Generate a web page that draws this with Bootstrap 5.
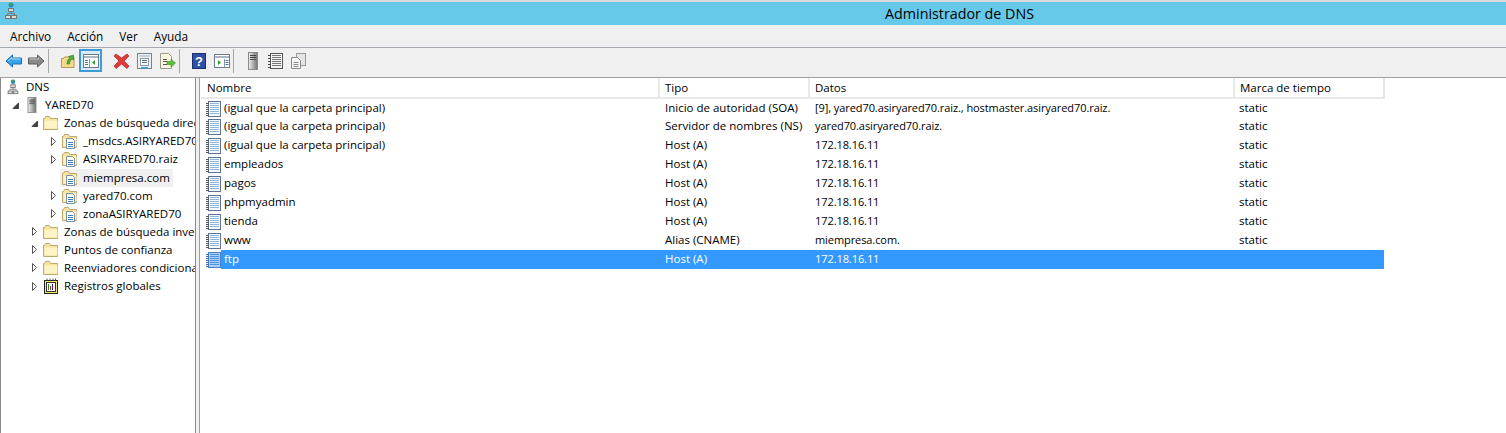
<!DOCTYPE html>
<html lang="es">
<head>
  <meta charset="UTF-8">
  <title>Administrador de DNS</title>
  <link href="https://cdn.jsdelivr.net/npm/bootstrap@5.3.0/dist/css/bootstrap.min.css" rel="stylesheet">
  <script src="https://cdn.jsdelivr.net/npm/bootstrap@5.3.0/dist/js/bootstrap.bundle.min.js"></script>
  <style>
    html, body { height: 433px; overflow: hidden; }
    body { background: #f0f0f0; color: #000; font-family: "Open Sans", "Noto Sans", sans-serif; font-size: 11.5px; line-height: 18px; }
    .win-title { height: 25px; background: #66c9ea; border-top: 2px solid #dcdcdc; padding-left: 3px; }
    .win-title-text { font-size: 14.3px; left: 885px; top: 3px; }
    .menu-bar { height: 23px; border-bottom: 1px solid #a9a9b2; padding-left: 3px; font-size: 11.8px; }
    .menu-item { padding: 0 7px; margin-right: 2px; }
    .tool-bar { height: 29px; padding: 1px 0 0 2px; }
    .tool-btn { width: 23px; height: 23px; padding: 0; border: 1px solid transparent; border-radius: 0; }
    .tool-btn.on { background: #d9ebf8; border: 2px solid #3d9bd6; }
    .tool-sep { width: 8px; height: 24px; }
    .tool-sep.ruled { border-left: 1px solid #a8a8a8; }
    .panes { height: 356px; border-top: 1px solid #a0a0a0; }
    .tree-pane { width: 196px; height: 100%; background: #fff; border-right: 1px solid #8c8c8c; border-left: 1px solid #8c8c8c; overflow: hidden; flex: none; }
    .tree-row { height: 18.1px; white-space: nowrap; }
    .lv0 { padding-left: 4px; }
    .lv1 { padding-left: 10px; }
    .lv2 { padding-left: 29px; }
    .lv3 { padding-left: 48px; }
    .twisty { width: 13px; flex: none; }
    .tree-ico { width: 16px; height: 16px; flex: none; margin-right: 5px; }
    .tree-sel { background: #f0f0f0; margin-left: -2px; padding: 0 3px 0 2px; height: 18px; }
    .list-pane { margin-left: 3px; background: #fff; border-left: 1px solid #a0a0a0; padding-left: 1px; flex: 1; height: 100%; }
    .rec-table { table-layout: fixed; width: 1183px; border-collapse: collapse; }
    .rec-table th { font-weight: 400; height: 20px; padding: 0 0 0 5px; border-right: 2px solid #e9e9e9; border-bottom: 2px solid #e9e9e9; }
    .rec-table th:first-child { padding-left: 6px; }
    .rec-table td { height: 19px; padding: 0 0 0 6px; white-space: nowrap; overflow: hidden; vertical-align: top; line-height: 17px; }
    .rec-table td.ico-cell { padding: 2px 0 0 5px; line-height: 0; }
    .rec-table td.name-cell { padding-left: 3px; }
    .rec-table td.data-cell { font-size: 11px; letter-spacing: -.08px; }
    .rec-table td.time-cell { padding-left: 5px; }
    .rec-table tr.picked td:not(.ico-cell) { background: #3399ff; color: #fff; }
    .rec-ico { width: 15px; height: 16px; display: block; }
  </style>
</head>
<body>
  <svg width="0" height="0" class="position-absolute">
    <defs>
      <linearGradient id="g-srv" x1="0" x2="1" y1="0" y2="0"><stop offset="0" stop-color="#f2f2f2"/><stop offset="1" stop-color="#6f6f6f"/></linearGradient>
      <symbol id="i-dns" viewBox="0 0 16 18">
        <circle cx="8" cy="3" r="2.500" fill="#2f86c4"/><path d="M6 2l2-1.500 1.500 1.500-1 2-1.500-.5z" fill="#3fa845"/>
        <rect x="5.500" y="6.500" width="5" height="3" fill="#dcdcdc" stroke="#777"/>
        <path d="M8 10v2M4.500 13v-1.500h7V13" fill="none" stroke="#777"/>
        <rect x="2.500" y="13.500" width="5" height="3" fill="#dcdcdc" stroke="#777"/>
        <rect x="8.500" y="13.500" width="5" height="3" fill="#dcdcdc" stroke="#777"/>
      </symbol>
      <symbol id="i-server" viewBox="0 0 16 18">
        <rect x="3.500" y="0.500" width="9" height="17" fill="url(#g-srv)" stroke="#8a8a8a"/>
        <path d="M5 3.500h6M5 5.500h6" stroke="#444"/><rect x="5" y="7" width="6" height="1" fill="#555"/>
      </symbol>
      <symbol id="i-folder" viewBox="0 0 16 16">
        <path d="M.5 14.500v-11h1l1-2h4l1 2h7v11z" fill="#f8e3a0" stroke="#bfa86e"/>
        <path d="M1.500 5.500h13v8h-13z" fill="#fdf3c6"/>
      </symbol>
      <symbol id="i-zone" viewBox="0 0 16 16">
        <path d="M.5 14.500v-11h1l1-2h4l1 2h7v11z" fill="#f8e3a0" stroke="#bfa86e"/>
        <path d="M1.500 5.500h13v8h-13z" fill="#fdf3c6"/>
        <path d="M4.500 5.500h6l2 2v8h-8z" fill="#fff" stroke="#7d8ea0"/>
        <path d="M6 9.500h5M6 11.500h5M6 13.500h5" stroke="#3f82bb"/>
      </symbol>
      <symbol id="i-global" viewBox="0 0 16 16">
        <rect x="1.500" y="2.500" width="13" height="13" fill="#f6e66c" stroke="#222"/>
        <path d="M3.500 1.500h1M6.500 1.500h1M9.500 1.500h1M12 1.500h1" stroke="#555" stroke-width="2"/>
        <rect x="3.500" y="4.500" width="9" height="9" fill="#fff" stroke="#333"/>
        <path d="M5.500 6v6" stroke="#2a8f2a"/><path d="M7.500 8v4" stroke="#d02020"/><path d="M9.500 6v6" stroke="#2222aa"/>
      </symbol>
      <symbol id="i-rec" viewBox="0 0 15 16">
        <rect x="2.500" y="0.500" width="12" height="15" fill="#f6fafd" stroke="#5f7396"/>
        <path d="M4 2.500h9M4 4.500h9M4 6.500h9M4 8.500h9M4 10.500h9M4 12.500h9" stroke="#8fb4dc"/>
        <path d="M0 2.500h3M0 4.500h3M0 6.500h3M0 8.500h3M0 10.500h3M0 12.500h3M0 14.500h3" stroke="#555"/>
      </symbol>
      <symbol id="i-rec-sel" viewBox="0 0 15 16">
        <rect x="2.500" y="0.500" width="12" height="15" fill="#a9cff6" stroke="#4d7fc4"/>
        <path d="M4 2.500h9M4 4.500h9M4 6.500h9M4 8.500h9M4 10.500h9M4 12.500h9" stroke="#4f94e0"/>
        <path d="M0 2.500h3M0 4.500h3M0 6.500h3M0 8.500h3M0 10.500h3M0 12.500h3M0 14.500h3" stroke="#3d6fb5"/>
      </symbol>
      <symbol id="i-open" viewBox="0 0 9 9"><path d="M2.500.5v8l4-4z" fill="#fff" stroke="#555"/></symbol>
      <symbol id="i-down" viewBox="0 0 9 9"><path d="M7.500 2v5.500H2z" fill="#404040" stroke="#404040"/></symbol>
    </defs>
  </svg>

  <div class="win-title position-relative">
    <svg width="16" height="18" class="d-block"><use href="#i-dns"/></svg>
    <span class="win-title-text position-absolute">Administrador de DNS</span>
  </div>

  <div class="menu-bar d-flex align-items-center">
    <span class="menu-item">Archivo</span>
    <span class="menu-item">Acción</span>
    <span class="menu-item">Ver</span>
    <span class="menu-item">Ayuda</span>
  </div>

  <div class="tool-bar d-flex align-items-start">
    <button class="btn tool-btn d-flex align-items-center justify-content-center" title="Atrás">
      <svg width="17" height="14" viewBox="0 0 17 14"><path d="M7.500 1L1 7l6.500 6V10h9V4h-9z" fill="#35a4ea" stroke="#1c6fb4"/><path d="M3 7l4-3.500V5h8.500" fill="none" stroke="#b5e2fb"/></svg>
    </button>
    <button class="btn tool-btn d-flex align-items-center justify-content-center" title="Adelante">
      <svg width="17" height="14" viewBox="0 0 17 14"><path d="M9.500 1L16 7l-6.500 6V10h-9V4h9z" fill="#8a8a8a" stroke="#5c5c5c"/><path d="M1.500 5h9V3.500" fill="none" stroke="#c4c4c4"/></svg>
    </button>
    <span class="tool-sep ruled"></span>
    <button class="btn tool-btn d-flex align-items-center justify-content-center" title="Subir">
      <svg width="16" height="16" viewBox="0 0 16 16"><path d="M1.500 14.500v-9h2l1-1.500h9.500v10.500z" fill="#f5d98a" stroke="#b7985a"/><path d="M7 11c0-3 1-5 3-6L8.500 3.500l5-1.500v5L12 6c-1.500 1-2.500 3-2.500 5z" fill="#4caf3c" stroke="#2c7d25" stroke-width=".6"/></svg>
    </button>
    <button class="btn tool-btn on d-flex align-items-center justify-content-center" title="Árbol">
      <svg width="16" height="14" viewBox="0 0 16 14"><rect x=".5" y=".5" width="15" height="13" fill="#fff" stroke="#6c7a8a"/><path d="M1 3h14" stroke="#a9b8c6" stroke-width="2"/><path d="M6.500 5v8" stroke="#8a98a6"/><path d="M2 6.500h3M2 8.500h3M2 10.500h3" stroke="#3c78b4"/><path d="M12 6v5L9 8.500z" fill="#32a032"/></svg>
    </button>
    <span class="tool-sep"></span>
    <button class="btn tool-btn d-flex align-items-center justify-content-center" title="Eliminar">
      <svg width="17" height="16" viewBox="0 0 17 16"><path d="M1 3l2-2 5.500 4L14 1l2 2-5 5 5 5-2 2.500L8.500 11 3 15.500 1 13l5-5z" fill="#e23a3a" stroke="#b02020" stroke-width=".7"/></svg>
    </button>
    <button class="btn tool-btn d-flex align-items-center justify-content-center" title="Propiedades">
      <svg width="15" height="16" viewBox="0 0 15 16"><rect x=".5" y=".5" width="14" height="15" fill="#eef1f4" stroke="#76828e"/><rect x="2" y="2" width="11" height="2" fill="#c7d0d9"/><rect x="3.500" y="5.500" width="8" height="7" fill="#fff" stroke="#8a97a5"/><path d="M5 7.500h5M5 9.500h5" stroke="#5c6c7c"/><rect x="4" y="14" width="7" height="1.500" fill="#33a3e0"/></svg>
    </button>
    <button class="btn tool-btn d-flex align-items-center justify-content-center" title="Exportar">
      <svg width="17" height="16" viewBox="0 0 17 16"><path d="M1.500.5h8l3 3v12h-11z" fill="#fbf6de" stroke="#9a9a8a"/><path d="M4 6.500h4M4 8.500h4M4 11.500h4" stroke="#555"/><path d="M8 8.500h4V6l4.500 4-4.500 4v-2.500H8z" fill="#56c23e" stroke="#37902a" stroke-width=".6"/></svg>
    </button>
    <span class="tool-sep ruled"></span>
    <button class="btn tool-btn d-flex align-items-center justify-content-center" title="Ayuda">
      <svg width="14" height="16" viewBox="0 0 14 16"><rect x=".5" y=".5" width="13" height="15" fill="#2f4fa8" stroke="#1c2f70"/><text x="7" y="12.500" text-anchor="middle" font-family="Liberation Sans, sans-serif" font-weight="700" font-size="13" fill="#fff">?</text></svg>
    </button>
    <button class="btn tool-btn d-flex align-items-center justify-content-center" title="Panel">
      <svg width="16" height="14" viewBox="0 0 16 14"><rect x=".5" y=".5" width="15" height="13" fill="#fff" stroke="#6c7a8a"/><path d="M1 3h14" stroke="#a9b8c6" stroke-width="2"/><path d="M10.500 5v8" stroke="#8a98a6"/><path d="M11.500 6.500h3M11.500 8.500h3M11.500 10.500h3" stroke="#3c78b4"/><path d="M4 6v5l3-2.500z" fill="#32a032"/></svg>
    </button>
    <span class="tool-sep ruled"></span>
    <button class="btn tool-btn d-flex align-items-center justify-content-center" title="Servidor">
      <svg width="16" height="18"><use href="#i-server"/></svg>
    </button>
    <button class="btn tool-btn d-flex align-items-center justify-content-center" title="Lista">
      <svg width="15" height="16" viewBox="0 0 15 16"><rect x="2.500" y=".5" width="12" height="15" fill="#f4f4f4" stroke="#555"/><path d="M4 2.500h9M4 4.500h9M4 6.500h9M4 8.500h9M4 10.500h9M4 12.500h9" stroke="#777"/><path d="M0 2.500h3M0 5.500h3M0 8.500h3M0 11.500h3M0 14.500h3" stroke="#444"/></svg>
    </button>
    <button class="btn tool-btn d-flex align-items-center justify-content-center" title="Copiar">
      <svg width="15" height="16" viewBox="0 0 15 16"><rect x="5.500" y=".5" width="9" height="12" fill="#e4e4e4" stroke="#9a9a9a"/><path d="M.5 4.500h6l3 3v8h-9z" fill="#f6f6f6" stroke="#8a8a8a"/><path d="M2.500 9.500h5M2.500 11.500h5M2.500 13.500h5" stroke="#8a8a8a"/></svg>
    </button>
  </div>

  <div class="panes d-flex">
    <div class="tree-pane">
      <div class="tree-row lv0 d-flex align-items-center"><svg class="tree-ico"><use href="#i-dns"/></svg>DNS</div>
      <div class="tree-row lv1 d-flex align-items-center"><svg class="twisty" width="13" height="9"><use href="#i-down" width="9" height="9"/></svg><svg class="tree-ico"><use href="#i-server"/></svg>YARED70</div>
      <div class="tree-row lv2 d-flex align-items-center"><svg class="twisty" width="13" height="9"><use href="#i-down" width="9" height="9"/></svg><svg class="tree-ico"><use href="#i-folder"/></svg>Zonas de búsqueda directa</div>
      <div class="tree-row lv3 d-flex align-items-center"><svg class="twisty" width="13" height="9"><use href="#i-open" width="9" height="9"/></svg><svg class="tree-ico"><use href="#i-zone"/></svg>_msdcs.ASIRYARED70.raiz</div>
      <div class="tree-row lv3 d-flex align-items-center"><svg class="twisty" width="13" height="9"><use href="#i-open" width="9" height="9"/></svg><svg class="tree-ico"><use href="#i-zone"/></svg>ASIRYARED70.raiz</div>
      <div class="tree-row lv3 d-flex align-items-center"><span class="twisty"></span><span class="tree-sel d-flex align-items-center"><svg class="tree-ico"><use href="#i-zone"/></svg>miempresa.com</span></div>
      <div class="tree-row lv3 d-flex align-items-center"><svg class="twisty" width="13" height="9"><use href="#i-open" width="9" height="9"/></svg><svg class="tree-ico"><use href="#i-zone"/></svg>yared70.com</div>
      <div class="tree-row lv3 d-flex align-items-center"><svg class="twisty" width="13" height="9"><use href="#i-open" width="9" height="9"/></svg><svg class="tree-ico"><use href="#i-zone"/></svg>zonaASIRYARED70</div>
      <div class="tree-row lv2 d-flex align-items-center"><svg class="twisty" width="13" height="9"><use href="#i-open" width="9" height="9"/></svg><svg class="tree-ico"><use href="#i-folder"/></svg>Zonas de búsqueda inversa</div>
      <div class="tree-row lv2 d-flex align-items-center"><svg class="twisty" width="13" height="9"><use href="#i-open" width="9" height="9"/></svg><svg class="tree-ico"><use href="#i-folder"/></svg>Puntos de confianza</div>
      <div class="tree-row lv2 d-flex align-items-center"><svg class="twisty" width="13" height="9"><use href="#i-open" width="9" height="9"/></svg><svg class="tree-ico"><use href="#i-folder"/></svg>Reenviadores condicionales</div>
      <div class="tree-row lv2 d-flex align-items-center"><svg class="twisty" width="13" height="9"><use href="#i-open" width="9" height="9"/></svg><svg class="tree-ico"><use href="#i-global"/></svg>Registros globales</div>
    </div>

    <div class="list-pane">
      <table class="rec-table">
        <colgroup><col style="width:20px"><col style="width:438px"><col style="width:150px"><col style="width:425px"><col style="width:150px"></colgroup>
        <thead>
          <tr><th colspan="2">Nombre</th><th>Tipo</th><th>Datos</th><th>Marca de tiempo</th></tr>
        </thead>
        <tbody>
          <tr><td class="ico-cell"><svg class="rec-ico"><use href="#i-rec"/></svg></td><td class="name-cell">(igual que la carpeta principal)</td><td>Inicio de autoridad (SOA)</td><td class="data-cell">[9], yared70.asiryared70.raiz., hostmaster.asiryared70.raiz.</td><td class="time-cell">static</td></tr>
          <tr><td class="ico-cell"><svg class="rec-ico"><use href="#i-rec"/></svg></td><td class="name-cell">(igual que la carpeta principal)</td><td>Servidor de nombres (NS)</td><td class="data-cell">yared70.asiryared70.raiz.</td><td class="time-cell">static</td></tr>
          <tr><td class="ico-cell"><svg class="rec-ico"><use href="#i-rec"/></svg></td><td class="name-cell">(igual que la carpeta principal)</td><td>Host (A)</td><td class="data-cell">172.18.16.11</td><td class="time-cell">static</td></tr>
          <tr><td class="ico-cell"><svg class="rec-ico"><use href="#i-rec"/></svg></td><td class="name-cell">empleados</td><td>Host (A)</td><td class="data-cell">172.18.16.11</td><td class="time-cell">static</td></tr>
          <tr><td class="ico-cell"><svg class="rec-ico"><use href="#i-rec"/></svg></td><td class="name-cell">pagos</td><td>Host (A)</td><td class="data-cell">172.18.16.11</td><td class="time-cell">static</td></tr>
          <tr><td class="ico-cell"><svg class="rec-ico"><use href="#i-rec"/></svg></td><td class="name-cell">phpmyadmin</td><td>Host (A)</td><td class="data-cell">172.18.16.11</td><td class="time-cell">static</td></tr>
          <tr><td class="ico-cell"><svg class="rec-ico"><use href="#i-rec"/></svg></td><td class="name-cell">tienda</td><td>Host (A)</td><td class="data-cell">172.18.16.11</td><td class="time-cell">static</td></tr>
          <tr><td class="ico-cell"><svg class="rec-ico"><use href="#i-rec"/></svg></td><td class="name-cell">www</td><td>Alias (CNAME)</td><td class="data-cell">miempresa.com.</td><td class="time-cell">static</td></tr>
          <tr class="picked"><td class="ico-cell"><svg class="rec-ico"><use href="#i-rec-sel"/></svg></td><td class="name-cell">ftp</td><td>Host (A)</td><td class="data-cell">172.18.16.11</td><td class="time-cell"></td></tr>
        </tbody>
      </table>
    </div>
  </div>
</body>
</html>
